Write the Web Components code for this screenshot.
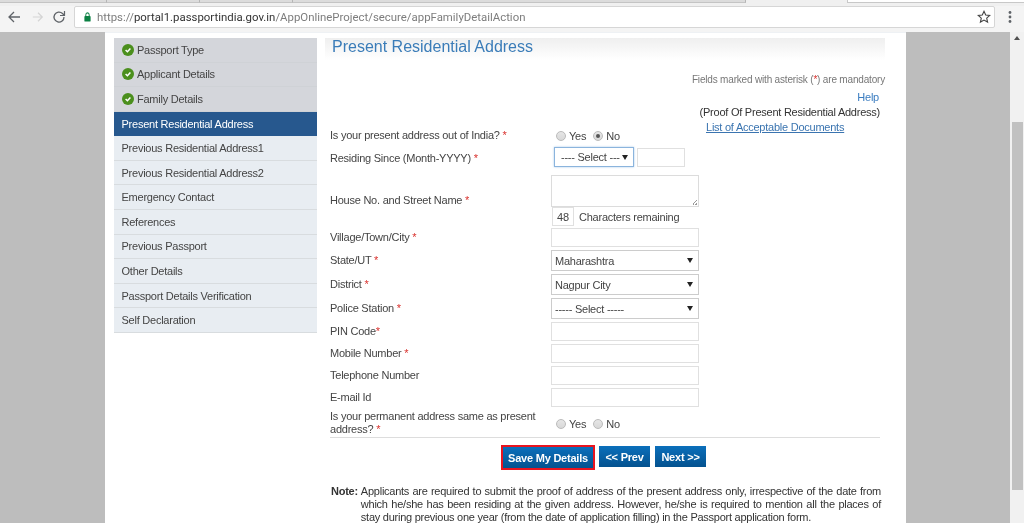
<!DOCTYPE html>
<html><head><meta charset="utf-8">
<style>
html,body{margin:0;padding:0;width:1024px;height:523px;overflow:hidden;background:#bdbdbd;font-family:"Liberation Sans",Arial,sans-serif;}
body{filter:blur(.35px)}
</style></head><body>
<x-chrome></x-chrome>
<x-page>
  <x-sidebar>
    <x-nav done>Passport Type</x-nav>
    <x-nav done>Applicant Details</x-nav>
    <x-nav done>Family Details</x-nav>
    <x-nav active>Present Residential Address</x-nav>
    <x-nav>Previous Residential Address1</x-nav>
    <x-nav>Previous Residential Address2</x-nav>
    <x-nav>Emergency Contact</x-nav>
    <x-nav>References</x-nav>
    <x-nav>Previous Passport</x-nav>
    <x-nav>Other Details</x-nav>
    <x-nav>Passport Details Verification</x-nav>
    <x-nav>Self Declaration</x-nav>
  </x-sidebar>
  <x-form-panel></x-form-panel>
</x-page>
<script>
function def(name, css, html){
  customElements.define(name, class extends HTMLElement{
    constructor(){super();const s=this.attachShadow({mode:'open'});s.innerHTML='<style>'+css+'</style>'+html;}
  });
}
const T='font-size:11px;letter-spacing:-.24px;';
def('x-chrome',`
:host{display:block;height:32px;background:#f4f4f4;box-sizing:border-box;}
.tabs{height:6px;display:flex;background:#f0f0f0;}
.tab{height:2px;border-right:1px solid #b5b5b5;border-bottom:1px solid #c4c4c4;background:#dcdcdc}
.tab.w{width:176px;background:#fff;border:1px solid #c8c8c8;border-top:0;border-right:0;margin-left:101px;}
.bar{height:26px;display:flex;align-items:center;padding:0 0 4px 0;box-sizing:border-box;}
.ic{flex:none;display:flex;align-items:center;justify-content:center;}
.url{flex:none;width:921px;height:22px;box-sizing:border-box;background:#fff;border:1px solid #d6d6d6;border-radius:2px;display:flex;align-items:center;padding-left:9px;font:11.4px Roboto,"Liberation Sans",sans-serif;color:#7d7d7d;white-space:nowrap}
.url b{font-weight:400;color:#333}
.url svg{margin-right:6px;flex:none}
.url span{flex:1}
.url .star{margin:0 3px 0 0}
`,`<div class="tabs"><div class="tab" style="width:106px"></div><div class="tab" style="width:92px"></div><div class="tab" style="width:92px"></div><div class="tab" style="width:453px"></div><div class="tab w"></div></div>
<div class="bar">
<div class="ic" style="width:28px"><svg width="14" height="14" viewBox="0 0 14 14" fill="none" stroke="#5f6368" stroke-width="1.3"><path d="M13 7H2M7 2L2 7l5 5"/></svg></div>
<div class="ic" style="width:20px"><svg width="12" height="12" viewBox="0 0 14 14" fill="none" stroke="#d4d4d4" stroke-width="1.4"><path d="M1 7h11M7 2l5 5-5 5"/></svg></div>
<div class="ic" style="width:22px"><svg width="14" height="14" viewBox="0 0 14 14" fill="none" stroke="#5f6368" stroke-width="1.3"><path d="M12 7a5 5 0 1 1-1.5-3.5L12 5"/><path d="M12.5 1v4.5H8" stroke-width="1.2"/></svg></div>
<div style="width:4px;flex:none"></div>
<div class="url"><svg width="7" height="10" viewBox="0 0 9 11" preserveAspectRatio="none"><path d="M2.3 5V3.2a2.2 2.2 0 0 1 4.4 0V5" fill="none" stroke="#0b8043" stroke-width="1.2"/><rect x="0.5" y="4.5" width="8" height="6" rx="1" fill="#0b8043"/></svg><span>https://<b>portal1.passportindia.gov.in</b>/AppOnlineProject/secure/appFamilyDetailAction</span>
<svg class="star" width="14" height="14" viewBox="0 0 14 14" fill="none" stroke="#444" stroke-width="1.1"><path d="M7 1.3l1.7 3.7 4 .4-3 2.7.9 4L7 10.1l-3.6 2 .9-4-3-2.7 4-.4z"/></svg></div>
<div class="ic" style="width:29px"><svg width="4" height="14" viewBox="0 0 4 14" fill="#5f6368"><circle cx="2" cy="2.5" r="1.4"/><circle cx="2" cy="7" r="1.4"/><circle cx="2" cy="11.5" r="1.4"/></svg></div>
</div>`);
def('x-page',`
:host{display:flex;height:491px;overflow:hidden;}
.col{flex:none;width:801px;margin-left:105px;background:#fff;box-sizing:border-box;padding:5px 0 0 9px;display:flex;align-items:flex-start;gap:8px;height:491px;border-top:1px solid #eef1f4}
.sb{flex:none;width:14px;margin-left:104px;background:#f1f1f1;display:flex;flex-direction:column;align-items:center}
.sb i{display:block;margin-top:4px;width:0;height:0;border:3.5px solid transparent;border-top:0;border-bottom:4px solid #505050}
.sb b{display:block;width:11px;height:368px;margin-top:82px;background:#c1c1c1}
`,`<div class="col"><slot></slot></div><div class="sb"><i></i><b></b></div>`);
def('x-sidebar',`:host{display:block;width:203px;flex:none}`,`<slot></slot>`);
def('x-nav',`
:host{display:flex;align-items:center;height:24.58px;box-sizing:border-box;padding:0 0 0 7.5px;background:#e8edf2;border-bottom:1px solid #d8dcdf;color:#444;${T}white-space:nowrap;gap:3px}
:host([done]){background:#d4d6db;padding-left:8px;border-bottom-color:#cfd2d6}
:host([active]){background:#27588e;color:#fff;border-bottom-color:#27588e}
svg{display:none;flex:none}
:host([done]) svg{display:block}
`,`<svg width="12" height="12" viewBox="0 0 12 12"><circle cx="6" cy="6" r="6" fill="#4b8f1d"/><path d="M3.6 6l1.8 1.7 3-3.2" fill="none" stroke="#fff" stroke-width="1.5"/></svg><slot></slot>`);
def('x-req',`:host{color:#d9302c}`,`*`);
def('x-radio',`
:host{display:inline-flex;align-items:center;gap:3px;margin-right:7px;color:#444;${T}}
i{display:block;width:10px;height:10px;border-radius:50%;box-sizing:border-box;border:1px solid #bbb;background:linear-gradient(#e6e6e6,#d8d8d8);position:relative;flex:none}
:host([on]) i::after{content:"";position:absolute;left:2px;top:2px;width:4px;height:4px;border-radius:50%;background:#555}
`,`<i></i><slot></slot>`);
def('x-select',`
:host{display:flex;align-items:center;justify-content:space-between;box-sizing:border-box;width:148px;height:21px;background:#fff;border:1px solid #ccc;padding:0 5px 0 3px;color:#444;${T}white-space:nowrap}
:host([focus]){border-color:#8bb4dd;box-shadow:0 0 2px #a9c9ea;width:80px;height:20px;padding:0 5px 0 6px}
i{display:block;width:0;height:0;border:3px solid transparent;border-top:5px solid #222;border-bottom:0;flex:none}
`,`<slot></slot><i></i>`);
def('x-input',`:host{display:block;box-sizing:border-box;width:148px;height:19px;background:#fff;border:1px solid #e0e0e0;}`,``);
def('x-row',`
:host{display:flex;align-items:center;box-sizing:border-box;color:#444;${T}padding-left:5px}
.l{flex:none;width:221px;line-height:13px}
.c{flex:none;display:flex;align-items:center}
:host([radio]) .c{padding-left:5px;padding-top:1px}
`,`<div class="l"><slot name="l"></slot></div><div class="c"><slot></slot></div>`);
def('x-btn',`
:host{display:inline-flex;align-items:center;justify-content:center;height:21px;box-sizing:border-box;color:#fff;font-weight:700;font-size:11px;letter-spacing:-.22px;background:linear-gradient(#0b6fbb,#04528f);white-space:nowrap;flex:none;width:51px}
:host([hl]){outline:2px solid #e8141f;width:90px;margin-top:1px;margin-right:1px}
`,`<slot></slot>`);
def('x-form-panel',`
:host{display:block;width:560px;flex:none;color:#444;${T}}
h1{margin:0;height:22px;padding:0 0 0 7px;font-weight:400;font-size:16px;letter-spacing:0;line-height:18px;color:#3a7cb8;background:linear-gradient(#efefef,#fff)}
.mand{margin-top:12px;height:15px;line-height:15px;text-align:right;font-size:10px;letter-spacing:-.18px;color:#777}
.mand em{font-style:normal;color:#d9302c}
.help{margin-top:3px;height:15px;line-height:15px;text-align:right;padding-right:6px;color:#3a7cc0}
.proof{height:15px;line-height:15px;text-align:right;padding-right:5px;color:#333}
.list{height:14px;line-height:14px;padding-left:381px;color:#3a74b0;text-decoration:underline}
hr{margin:1px 5px 0;border:0;border-top:1px solid #ddd;height:0}
.btns{display:flex;align-items:flex-start;gap:5px;padding:8px 0 0 178px;height:22px}
.note{margin:17px 4px 0 6px;display:flex;gap:3px;line-height:13px;color:#333;text-align:justify;letter-spacing:-.25px}
.note b{flex:none;color:#333}
.hc{display:flex;flex-direction:column}
.count{display:flex;align-items:center;gap:5px;color:#444;height:19px;box-sizing:border-box;padding-left:1px}
.n{box-sizing:border-box;width:22px;height:19px;border:1px solid #e0e0e0;display:flex;align-items:center;justify-content:center}
.ta{display:block;box-sizing:border-box;width:148px;height:32px;border:1px solid #dcdcdc;background:#fff;position:relative}
.ta::after{content:"";position:absolute;right:1px;bottom:1px;width:5px;height:5px;background:linear-gradient(135deg,transparent 50%,#999 50%,#999 60%,transparent 60%,transparent 75%,#999 75%)}
.yr{display:block;box-sizing:border-box;width:48px;height:19px;border:1px solid #e0e0e0;margin-left:3px}
.sel{padding-left:3px;display:flex;align-items:center}
.dn{padding-top:2px;display:block}
`,`<h1>Present Residential Address</h1>
<div class="mand">Fields marked with asterisk (<em>*</em>) are mandatory</div>
<div class="help">Help</div>
<div class="proof">(Proof Of Present Residential Address)</div>
<div class="list">List of Acceptable Documents</div>
<x-row radio style="height:14px;margin-top:-6px"><span slot="l">Is your present address out of India? <x-req></x-req></span><x-radio>Yes</x-radio><x-radio on>No</x-radio></x-row>
<x-row style="height:20px;margin-top:5px;"><span slot="l" class="dn">Residing Since (Month-YYYY) <x-req></x-req></span><span class="sel"><x-select focus>---- Select ---</x-select><span class="yr"></span></span></x-row>
<x-row style="margin-top:8px"><span slot="l">House No. and Street Name <x-req></x-req></span><span class="hc"><span class="ta"></span><span class="count"><span class="n">48</span>Characters remaining</span></span></x-row>
<x-row style="height:19px;margin-top:2px"><span slot="l">Village/Town/City <x-req></x-req></span><x-input></x-input></x-row>
<x-row style="height:21px;margin-top:3px"><span slot="l">State/UT <x-req></x-req></span><x-select>Maharashtra</x-select></x-row>
<x-row style="height:21px;margin-top:3px"><span slot="l">District <x-req></x-req></span><x-select>Nagpur City</x-select></x-row>
<x-row style="height:21px;margin-top:3px"><span slot="l">Police Station <x-req></x-req></span><x-select>----- Select -----</x-select></x-row>
<x-row style="height:19px;margin-top:3px"><span slot="l">PIN Code<x-req></x-req></span><x-input></x-input></x-row>
<x-row style="height:19px;margin-top:3px"><span slot="l">Mobile Number <x-req></x-req></span><x-input></x-input></x-row>
<x-row style="height:19px;margin-top:3px"><span slot="l">Telephone Number</span><x-input></x-input></x-row>
<x-row style="height:19px;margin-top:3px"><span slot="l">E-mail Id</span><x-input></x-input></x-row>
<x-row radio style="height:26px;margin-top:3px"><span slot="l">Is your permanent address same as present<br>address? <x-req></x-req></span><x-radio>Yes</x-radio><x-radio>No</x-radio></x-row>
<hr>
<div class="btns"><x-btn hl>Save My Details</x-btn><x-btn>&lt;&lt; Prev</x-btn><x-btn>Next &gt;&gt;</x-btn></div>
<div class="note"><b>Note:</b><span>Applicants are required to submit the proof of address of the present address only, irrespective of the date from which he/she has been residing at the given address. However, he/she is required to mention all the places of stay during previous one year (from the date of application filling) in the Passport application form.</span></div>
`);
</script>
</body></html>
